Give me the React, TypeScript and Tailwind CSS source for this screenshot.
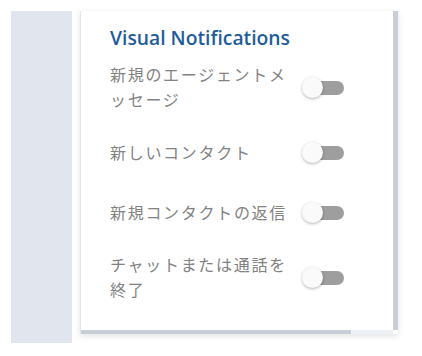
import React from "react";

const items = [
  "新規のエージェントメッセージ",
  "新しいコンタクト",
  "新規コンタクトの返信",
  "チャットまたは通話を終了",
];

function Toggle() {
  return (
    <div className="relative w-[42px] h-[21px] shrink-0">
      <div className="absolute right-0 top-[4px] w-[35px] h-[14px] rounded-full bg-[#9e9e9e]" />
      <div className="absolute left-0 top-0 w-[21px] h-[21px] rounded-full bg-[#fafafa] shadow-[0_1px_3px_rgba(0,0,0,0.3)]" />
    </div>
  );
}

export default function App() {
  return (
    <div className="w-[422px] h-[356px] bg-white flex items-start pt-[11px] pl-[11px] overflow-hidden">
      <div className="w-[61px] h-[332px] bg-[#e1e6ee] shrink-0" />
      <div className="ml-[8px] w-[318px] h-[323px] bg-white flex flex-col border-l border-[#e4e4e4] shadow-[0_2px_6px_rgba(0,0,0,0.12)]">
        <div className="flex flex-1 min-h-0">
          <div className="flex-1 pl-[29px] pt-[13px]">
            <h2 className="text-[19.3px] leading-[28px] font-semibold text-[#1f5c9c] font-['Open_Sans',sans-serif]">
              Visual Notifications
            </h2>
            <div className="flex flex-col">
              {items.map((label, i) => (
                <div
                  key={label}
                  className={`flex items-center ${i === 0 || i === 3 ? "h-[70px]" : "h-[60px]"}`}
                >
                  <span className="w-[190px] text-[16px] leading-[25px] tracking-[1.7px] text-[#828282] font-['Noto_Sans_CJK_JP',sans-serif]">
                    {label}
                  </span>
                  <div className="ml-[2px]">
                    <Toggle />
                  </div>
                </div>
              ))}
            </div>
          </div>
          <div className="w-[5px] bg-[#c7ced6]" />
        </div>
        <div className="flex h-[4px]">
          <div className="w-[270px] bg-[#c7ced6]" />
          <div className="flex-1 bg-[#eef2f6]" />
          <div className="w-[5px] bg-white" />
        </div>
      </div>
    </div>
  );
}
